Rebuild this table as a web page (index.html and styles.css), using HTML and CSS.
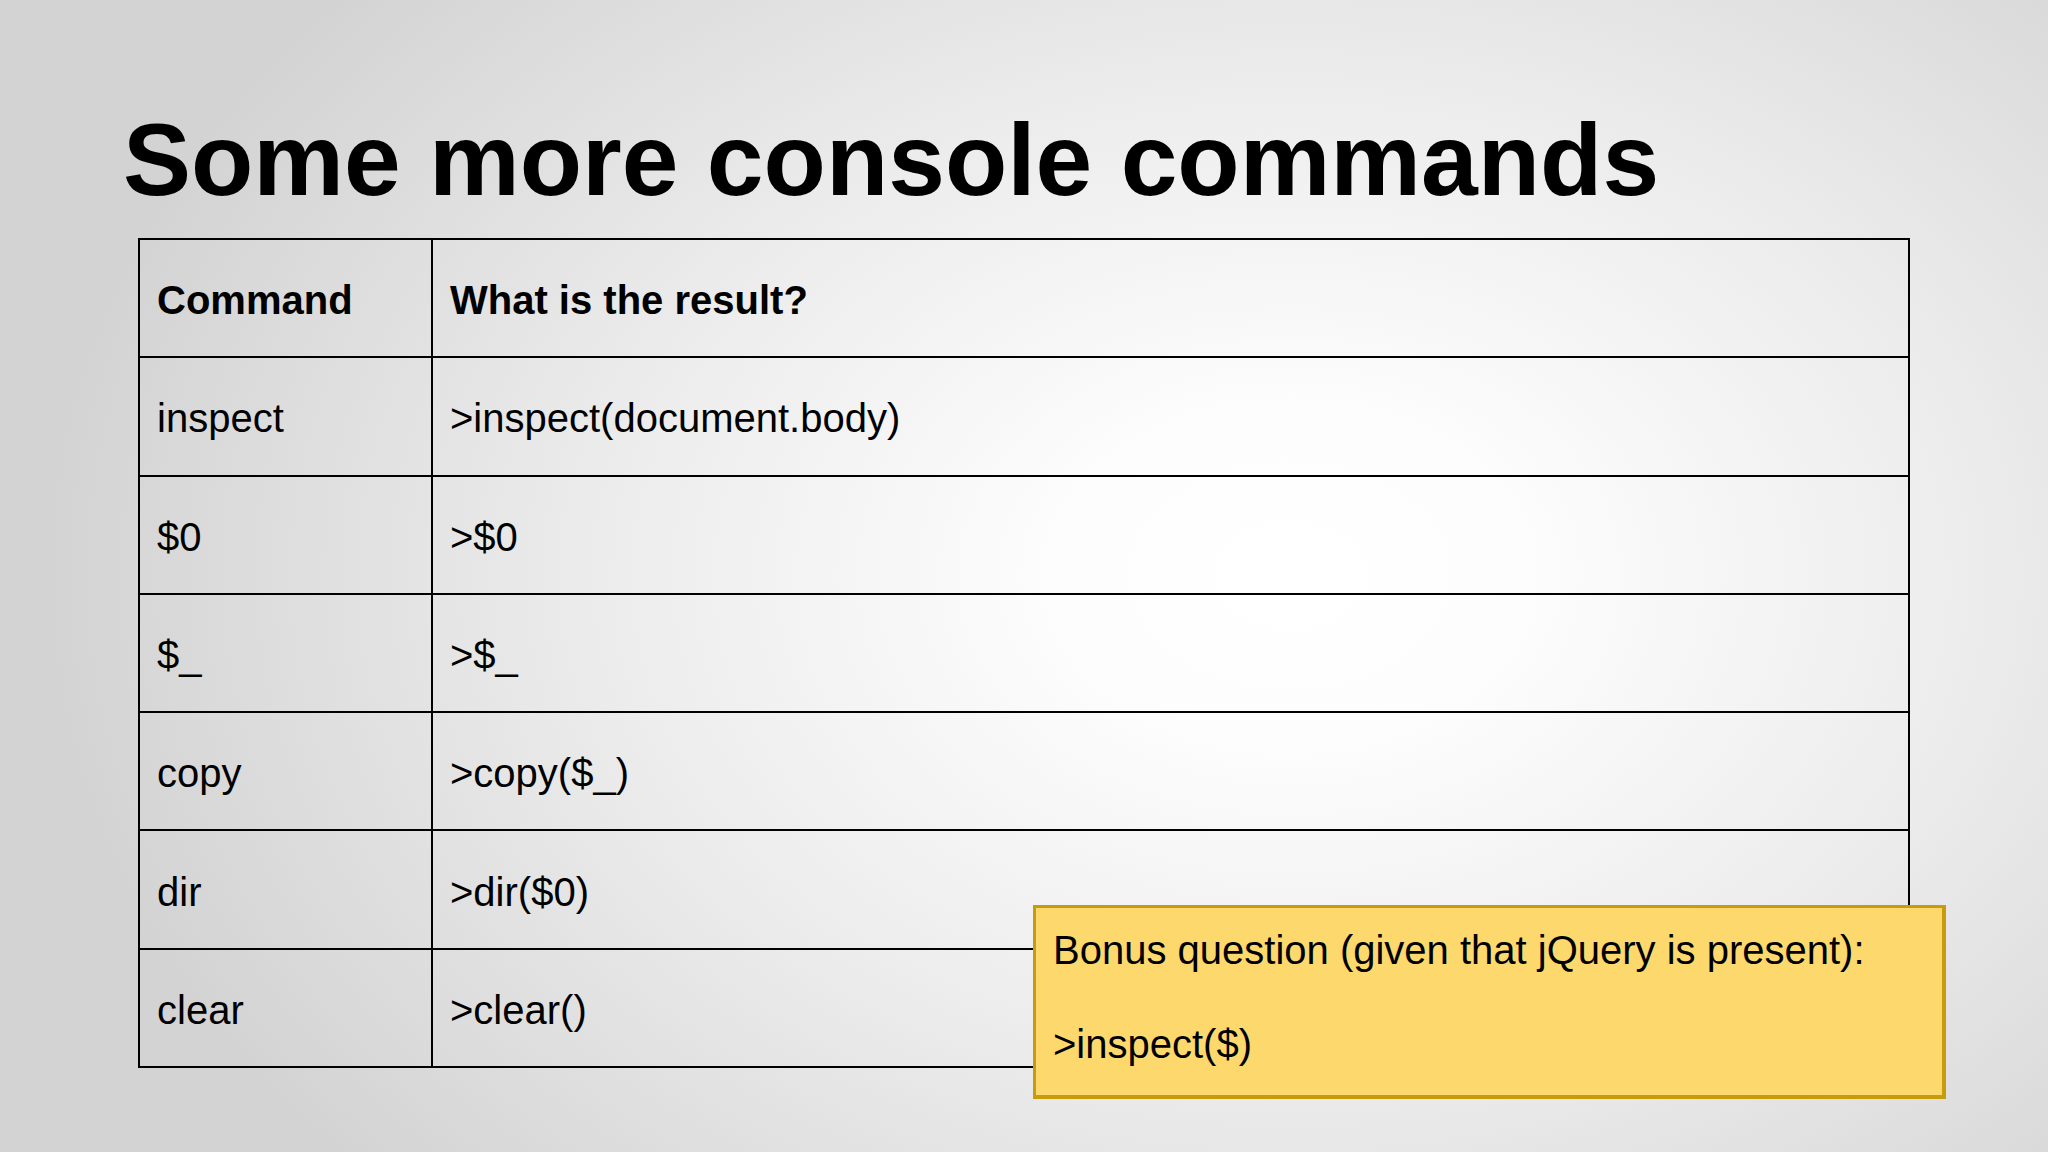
FILE: index.html
```html
<!DOCTYPE html>
<html>
<head>
<meta charset="utf-8">
<link rel="stylesheet" href="styles.css">
</head>
<body>
<div class="slide">
  <h1 class="title">Some more console commands</h1>
  <table class="cmds">
    <colgroup><col class="c1"><col class="c2"></colgroup>
    <tr class="head"><td>Command</td><td>What is the result?</td></tr>
    <tr><td>inspect</td><td>&gt;inspect(document.body)</td></tr>
    <tr><td>$0</td><td>&gt;$0</td></tr>
    <tr><td>$_</td><td>&gt;$_</td></tr>
    <tr><td>copy</td><td>&gt;copy($_)</td></tr>
    <tr><td>dir</td><td>&gt;dir($0)</td></tr>
    <tr><td>clear</td><td>&gt;clear()</td></tr>
  </table>
  <div class="bonus">
    <p>Bonus question (given that jQuery is present):</p>
    <p>&nbsp;</p>
    <p>&gt;inspect($)</p>
  </div>
</div>
</body>
</html>
```
FILE: styles.css
```css
html, body {
  margin: 0;
  padding: 0;
}
body {
  width: 2048px;
  height: 1152px;
  overflow: hidden;
  font-family: "Liberation Sans", Arial, sans-serif;
  color: #000;
}
.slide {
  position: relative;
  width: 2048px;
  height: 1152px;
  background: radial-gradient(ellipse 1250px 900px at 63% 50%, #ffffff 0%, #fdfdfd 18%, #ececec 55%, #d3d3d3 100%);
  display: flex;
  flex-direction: column;
  align-items: flex-start;
}
.title {
  margin: 109px 0 0 123px;
  font-size: 102px;
  line-height: 1;
  font-weight: bold;
  letter-spacing: 0;
}
.cmds {
  margin: 27px 0 0 138px;
  width: 1772px;
  border-collapse: collapse;
  table-layout: fixed;
  font-size: 40px;
}
.cmds col.c1 { width: 293px; }
.cmds td {
  border: 2px solid #000;
  height: 112.3px;
  padding: 4px 0 0 17px;
  vertical-align: middle;
  line-height: 46px;
}
.cmds tr.head td {
  font-weight: bold;
}
.bonus {
  position: absolute;
  left: 1033px;
  top: 905px;
  width: 913px;
  height: 194px;
  box-sizing: border-box;
  background: #fdd96d;
  border: 3px solid #c69b0c;
  border-right-width: 4px;
  border-bottom-width: 4px;
  padding: 19px 0 0 17px;
  font-size: 40px;
  line-height: 47px;
}
.bonus p {
  margin: 0;
}
```
